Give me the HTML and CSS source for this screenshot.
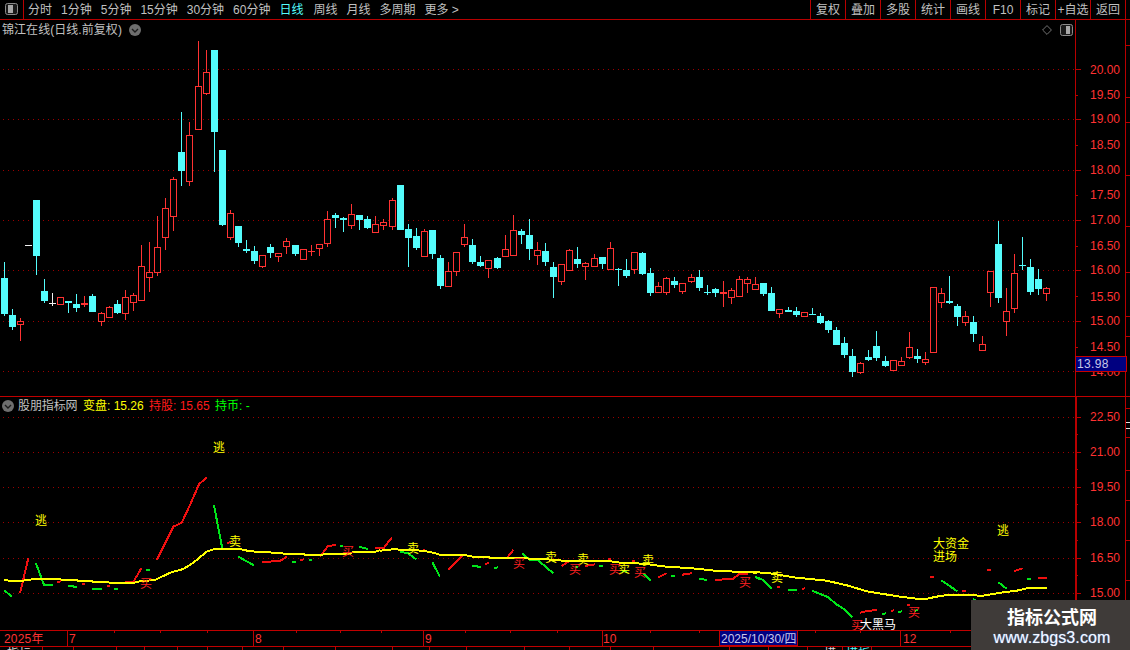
FILE: index.html
```html
<!DOCTYPE html>
<html lang="zh-CN">
<head>
<meta charset="utf-8">
<title>锦江在线 日线</title>
<link rel="stylesheet" href="styles.css">
</head>
<body>
<div class="app">
  <header class="toolbar">
    <div class="toggle">
      <svg class="ico" viewBox="0 0 13 12"><rect x="0.5" y="0.5" width="12" height="11" rx="2" class="ico-frame"/><rect x="3" y="2" width="5" height="8" class="ico-fill"/></svg>
    </div>
    <nav class="periods">
      <span>分时</span><span>1分钟</span><span>5分钟</span><span>15分钟</span><span>30分钟</span><span>60分钟</span>
      <span class="on">日线</span><span class="wk">周线</span><span>月线</span><span>多周期</span><span>更多 &gt;</span>
    </nav>
    <div class="tools">
      <span>复权</span><span>叠加</span><span>多股</span><span>统计</span><span>画线</span><span>F10</span><span>标记</span><span>+自选</span><span>返回</span>
    </div>
    <div class="strip"></div>
  </header>

  <section class="panel panel-main">
    <svg class="chart" id="main" viewBox="0 20 1130 376" width="1130" height="376">
      <g id="main-draw"></g>
      <g class="axis-text">
        <text x="1120" y="70">20.00</text><text x="1120" y="95">19.50</text><text x="1120" y="119">19.00</text>
        <text x="1120" y="145">18.50</text><text x="1120" y="170">18.00</text><text x="1120" y="195">17.50</text>
        <text x="1120" y="220">17.00</text><text x="1120" y="246">16.50</text><text x="1120" y="270">16.00</text>
        <text x="1120" y="297">15.50</text><text x="1120" y="321">15.00</text><text x="1120" y="347">14.50</text>
        <text x="1120" y="372">14.00</text>
      </g>
    </svg>
    <div class="title">
      <span>锦江在线(日线.前复权)</span>
      <svg class="circle" viewBox="0 0 12 12"><circle cx="6" cy="6" r="6" class="c-bg"/><path d="M3 5l3 3 3-3" class="c-ch"/></svg>
    </div>
    <div class="corner">
      <svg class="diamond" viewBox="0 0 12 12"><path d="M6 .7L11.3 6 6 11.3.7 6z"/></svg>
      <svg class="ico" viewBox="0 0 13 12"><rect x="0.5" y="0.5" width="12" height="11" rx="2" class="ico-frame"/><rect x="6" y="2" width="4" height="8" class="ico-fill"/></svg>
    </div>
    <div class="price">13.98</div>
  </section>

  <section class="panel panel-ind">
    <svg class="chart" id="ind" viewBox="0 397 1130 233" width="1130" height="233">
      <g id="ind-draw"></g>
      <g class="axis-text">
        <text x="1120" y="417">22.50</text><text x="1120" y="452">21.00</text><text x="1120" y="487">19.50</text>
        <text x="1120" y="522">18.00</text><text x="1120" y="558">16.50</text><text x="1120" y="593">15.00</text>
      </g>
      <g class="sig">
        <text class="y" x="41" y="519">逃</text><text class="y" x="219" y="446">逃</text><text class="y" x="1003" y="529">逃</text>
        <text class="y" x="235" y="540">卖</text><text class="y" x="413" y="547">卖</text><text class="y" x="551" y="556">卖</text>
        <text class="y" x="583" y="558">卖</text><text class="y" x="648" y="559">卖</text><text class="y" x="624" y="567">卖</text>
        <text class="y" x="777" y="576">卖</text>
        <text class="r" x="146" y="582">买</text><text class="r" x="348" y="550">买</text><text class="r" x="519" y="562">买</text>
        <text class="r" x="575" y="568">买</text><text class="r" x="615" y="568">买</text><text class="r" x="640" y="571">买</text>
        <text class="r" x="745" y="581">买</text><text class="r" x="914" y="611">买</text><text class="r" x="857" y="624">买</text>
        <text class="w" x="878" y="623">大黑马</text>
        <text class="y" x="951" y="542">大资金</text><text class="y" x="945" y="555">进场</text>
      </g>
    </svg>
    <div class="legend">
      <svg class="circle" viewBox="0 0 12 12"><circle cx="6" cy="6" r="6" class="c-bg"/><path d="M3 5l3 3 3-3" class="c-ch"/></svg>
      <span class="l-name">股朋指标网</span>
      <span class="l-y">变盘: 15.26</span>
      <span class="l-r">持股: 15.65</span>
      <span class="l-g">持币: -</span>
    </div>
  </section>

  <footer class="dates">
    <svg class="chart" id="dates" viewBox="0 630 1130 20" width="1130" height="20">
      <g id="dates-draw"></g>
      <rect class="date-box" x="719.5" y="630.5" width="78" height="15"/>
      <g class="date-text">
        <text x="4" y="643">2025年</text><text x="69" y="643">7</text><text x="255" y="643">8</text>
        <text x="425" y="643">9</text><text x="603" y="643">10</text><text x="903" y="643">12</text>
        <text class="cur" x="721" y="643">2025/10/30/四</text>
      </g>
      <text class="tab" x="7" y="658">指标</text>
      <text class="tab" x="824" y="658">模</text>
      <text class="tab cy" x="846" y="658">模板</text>
    </svg>
  </footer>
  <aside class="mark">
    <strong>指标公式网</strong>
    <span>www.zbgs3.com</span>
  </aside>
</div>
<script src="chart.js"></script>
</body>
</html>
```
FILE: styles.css
```css
* { box-sizing: border-box; }
html, body { margin: 0; padding: 0; background: #000; }
body { width: 1130px; height: 650px; overflow: hidden; font: 12px/1 "Liberation Sans", "Noto Sans CJK SC", sans-serif; color: #c0c0c0; }
.app { position: relative; width: 1130px; height: 650px; display: flex; flex-direction: column; overflow: hidden; }

.toolbar { flex: 0 0 20px; display: flex; align-items: stretch; border-bottom: 1px solid #b80000; }
.toggle { flex: 0 0 24px; border-right: 1px solid #b80000; display: flex; align-items: center; justify-content: center; padding-right: 1px; padding-bottom: 1px; }
.ico { width: 13px; height: 12px; display: block; }
.ico-frame { fill: #1a1a1a; stroke: #8a8a8a; stroke-width: 1; }
.ico-fill { fill: #a8a8a8; }
.periods { display: flex; align-items: center; gap: 9px; padding-left: 4px; white-space: nowrap; }
.periods .on { color: #54fcfc; }
.periods .wk { margin-left: 1px; }
.tools { margin-left: auto; display: flex; }
.tools span { width: 35px; border-left: 1px solid #b80000; display: flex; align-items: center; justify-content: center; white-space: nowrap; }
.strip { flex: 0 0 5px; border-left: 1px solid #b80000; }

.panel { position: relative; flex: none; }
.panel-main { height: 377px; border-bottom: 1px solid #c00000; }
.panel-ind { height: 233px; }
.chart { display: block; shape-rendering: crispEdges; }
.axis-text text { fill: #ff3232; font: 12px "Liberation Sans", sans-serif; text-anchor: end; dominant-baseline: central; letter-spacing: 0; }
.sig text { font: 12px "Noto Sans CJK SC", sans-serif; text-anchor: middle; dominant-baseline: central; }
.sig .y { fill: #ffff00; }
.sig .r { fill: #ff2020; }
.sig .w { fill: #fff; }

.title { position: absolute; left: 2px; top: 3px; display: flex; align-items: center; gap: 7px; height: 13px; white-space: nowrap; }
.title span { letter-spacing: .05px; }
.circle { width: 12px; height: 12px; flex: none; display: block; }
.c-bg { fill: #6e6e6e; }
.c-ch { fill: none; stroke: #1c1c1c; stroke-width: 1.4; }
.corner { position: absolute; left: 1042px; top: 4px; display: flex; align-items: center; gap: 8px; }
.diamond { width: 10px; height: 12px; display: block; }
.diamond path { fill: none; stroke: #8a8a8a; stroke-width: 1; }
.price { position: absolute; left: 1075px; top: 336px; width: 52px; height: 16px; background: #000080; border: 1px solid #c80000; color: #c8c8e8; padding-left: 1px; display: flex; align-items: center; font-size: 12px; letter-spacing: .35px; }

.legend { position: absolute; left: 2px; top: 2px; display: flex; align-items: center; height: 13px; white-space: nowrap; }
.l-name { margin-left: 4px; width: 65px; letter-spacing: -.1px; }
.l-y { color: #ffff00; width: 66px; }
.l-r { color: #ff1a1a; width: 66px; }
.l-g { color: #00ff00; }

.dates { flex: 1 1 auto; }
.date-box { fill: #000080; stroke: #c00000; stroke-width: 1; }
.date-text text { fill: #ff3232; font: 12px "Liberation Sans", "Noto Sans CJK SC", sans-serif; letter-spacing: .2px; }
.date-text .cur { fill: #c8c8e8; letter-spacing: 0; }
.tab { fill: #d8d8d8; font: 12px "Noto Sans CJK SC", sans-serif; }
.cy { fill: #54fcfc; }

.mark { position: absolute; left: 971px; top: 600px; width: 159px; height: 50px; background: #3f3b39; display: flex; flex-direction: column; align-items: center; gap: 3px; padding-top: 6px; padding-left: 3px; }
.mark strong { color: #fff; font: bold 18px/20px "Noto Sans CJK SC", sans-serif; }
.mark span { color: #f4f8ff; font: 16px/18px "Liberation Sans", sans-serif; letter-spacing: .1px; text-shadow: 0 0 1px #6fa8ff; }
```
FILE: chart.js
```js
var NS = "http://www.w3.org/2000/svg";
function el(parent, name, attrs) {
  var n = document.createElementNS(NS, name);
  for (var k in attrs) n.setAttribute(k, attrs[k]);
  parent.appendChild(n);
  return n;
}
function rect(p, x, y, w, h, fill) { return el(p, "rect", { x: x, y: y, width: w, height: h, fill: fill }); }
var RED = "#ff3232", CY = "#54fcfc", LINE = "#b80000", DOT = "#9c0000";

// type, wick top, body top, body bottom, wick bottom
var candles = [
"c262,278,314,316","c309,315,327,330","r318,321,324,341","d245,245,246,245","c200,200,256,275",
"c279,291,301,303","w293,303,304,306","r297,297,304,305","c301,301,303,313","c294,304,308,312",
"f296,303,305,307","c294,296,312,312","r312,313,321,326","r306,307,317,318","c300,304,313,314",
"r290,297,313,320","r293,295,302,311","r245,266,300,300","r242,272,277,292","r216,247,272,276",
"r198,208,237,250","r177,179,216,231","c112,152,171,186","r122,135,181,186","r41,86,129,129",
"r50,72,93,95","c50,50,132,172","c150,150,225,226","r210,213,237,240","c226,226,243,247",
"c240,249,251,253","c246,251,261,264","r255,255,266,268","c244,247,253,258","r253,253,256,262",
"r238,241,246,254","c245,245,254,256","r249,249,259,259","f245,251,252,256","r244,244,248,256",
"r211,219,243,247","c213,215,218,228","c217,218,220,232","r204,214,225,229","c215,215,220,230",
"c216,219,228,229","r216,224,232,232","r219,222,225,230","r198,200,226,230","c185,185,230,230",
"c224,229,238,267","c228,236,248,250","r229,231,256,256","c230,230,254,259","c255,258,286,289",
"r262,271,286,286","r252,252,271,276","r224,237,244,247","c239,245,262,264","c256,262,266,267",
"r260,260,268,278","c257,258,268,269","r235,249,256,256","r215,230,255,255","c229,231,235,244",
"c219,235,249,260","r242,250,255,265","c243,251,262,266","c262,267,277,298","r264,264,281,285",
"r249,250,270,270","c247,259,264,268","r262,263,266,280","r254,258,266,266","c257,257,264,269",
"r242,248,269,269","c268,269,270,286","c259,270,276,278","r252,252,269,274","c252,253,274,275",
"c268,273,293,296","r282,286,292,292","r277,278,292,295","c277,281,285,288","r283,283,291,294",
"r274,277,281,283","c270,277,288,291","c285,292,293,295","c288,289,293,297","f281,292,294,307",
"r288,290,297,304","r276,279,296,296","r277,279,283,293","r277,284,289,289","c283,283,294,296",
"c287,293,311,311","r309,309,313,318","c307,310,312,312","c307,311,315,317","r312,312,316,316",
"c308,314,315,315","c313,316,323,324","c320,321,330,333","c327,330,345,345","c337,343,355,358",
"c349,356,372,377","r362,363,372,374","c350,357,360,361","c331,346,358,361","c356,361,366,367",
"r360,360,370,370","r357,361,365,365","r332,347,357,359","c349,356,359,363","r352,359,362,365",
"r287,287,352,352","r288,293,302,308","c276,301,303,304","c304,306,317,326","r311,316,322,326",
"c316,322,334,342","r336,344,350,351","r271,271,292,307","c221,244,298,303","r288,311,321,336",
"r254,273,308,313","c237,265,266,270","c259,267,292,295","c269,279,289,295","r287,288,293,301"
];
var jumps = [12, 24, 36, 48, 61, 73, 85, 97, 109, 121];
function cx(i) {
  var j = 0;
  jumps.forEach(function (n) { if (i >= n) j++; });
  return 4 + 8 * i + j;
}

function grid(g, ys) {
  ys.forEach(function (y) {
    el(g, "line", { x1: 3, x2: 1075, y1: y + .5, y2: y + .5, stroke: DOT, "stroke-dasharray": "1 4" });
  });
}
function axis(g, x, y1, y2, w, majors, minors) {
  rect(g, x, y1, w, y2 - y1, LINE);
  majors.forEach(function (y) { rect(g, x, y, 6, 1, LINE); });
  minors.forEach(function (y) { rect(g, x, y, 3, 1, LINE); });
}
function rightStrip(g, y1, y2, ticks) {
  rect(g, 1125, y1, 1, y2 - y1, LINE);
  ticks.forEach(function (y) { rect(g, 1126, y, 4, 1, LINE); });
}

// main panel
var m = document.getElementById("main-draw");
grid(m, [69, 119, 170, 220, 270, 321, 371]);
axis(m, 1075, 20, 396, 1, [69, 119, 170, 220, 270, 321, 371], [95, 145, 195, 246, 296, 347]);
rightStrip(m, 20, 396, [45, 97, 122, 175, 226, 272, 316, 336]);
candles.forEach(function (s, i) {
  var t = s[0], v = s.slice(1).split(",").map(Number), x = cx(i);
  var col = t === "c" ? CY : (t === "d" || t === "w") ? "#f0f0f0" : RED;
  if (t === "d") { rect(m, x - 3, v[0], 7, 1, col); return; }
  rect(m, x, v[0], 1, v[3] - v[0], col);
  if (t === "c" || t === "f") { rect(m, x - 3, v[1], 7, Math.max(v[2] - v[1], 1), col); return; }
  if (t === "w") { rect(m, x - 3, v[1], 7, 1, col); return; }
  el(m, "rect", { x: x - 2.5, y: v[1] + .5, width: 6, height: v[2] - v[1], fill: "#000", stroke: col });
});

// indicator panel
var n = document.getElementById("ind-draw");
var YEL = "#ffff00", R2 = "#f01010", G2 = "#00e61a";
grid(n, [417, 452, 487, 522, 558, 593]);
axis(n, 1075, 397, 630, 2, [417, 452, 487, 522, 558, 593], [434, 469, 504, 540, 575, 611]);
rightStrip(n, 397, 630, [408, 437, 470, 500, 540, 580, 610]);
rect(n, 1126, 422, 4, 1, "#e0e0e0");
rect(n, 1126, 428, 4, 1, "#e0e0e0");

function poly(col, w, ox, oy, sets) {
  sets.forEach(function (a) {
    var pts = [];
    for (var i = 0; i < a.length; i += 2) pts.push((ox + a[i] / 3).toFixed(1) + "," + (oy + a[i + 1] / 3).toFixed(1));
    el(n, "polyline", { points: pts.join(" "), fill: "none", stroke: col, "stroke-width": w });
  });
}
// three reference frames of the source crops: (0,390) (380,520) (750,400)
poly(R2, 2, 0, 390, [[60,610,85,505],[376,576,400,576,425,533],[470,510,495,460,520,410,545,398,570,345,597,283,620,262],[172,576,182,574],[245,582,255,581],[320,589,330,587],[682,458,692,457],[787,516,840,513,860,500],[900,510,912,508],[960,500,985,467,1007,466],[1125,474,1140,473]]);
poly(G2, 2, 0, 390, [[12,601,37,620],[108,520,132,585,158,585],[205,587,230,591],[277,597,305,597],[343,597,353,596],[438,541,450,540],[642,346,667,476],[715,500,762,526],[877,516,887,515],[926,510,935,509],[1020,468,1030,467],[1078,470,1103,477]]);
poly(R2, 2, 380, 520, [[0,85,12,83,36,52],[125,92,135,91],[205,150,250,103],[316,131,326,130],[378,117,400,90],[545,138,570,122],[616,138,645,133],[684,117,692,116],[755,123,765,122],[835,172,860,160],[907,164,935,160],[1005,180,1060,176,1078,162,1105,161]]);
poly(G2, 2, 380, 520, [[60,95,85,100,108,118],[157,127,180,170],[277,137,302,141],[343,144,353,142],[425,100,450,119,473,120,520,160],[585,142,595,140],[658,138,668,137],[725,152,740,155],[790,160,812,182],[873,168,885,167],[958,176,982,180],[1125,170,1140,178]]);
poly(R2, 2, 750, 400, [[80,561,90,560],[155,567,165,565],[330,638,355,632,380,631],[422,633,432,631],[470,614,480,615],[540,531,552,530],[636,574,648,572],[712,511,722,509],[793,513,818,505],[865,534,890,534]]);
poly(G2, 2, 750, 400, [[15,530,40,540,65,566],[115,570,140,570],[187,572,235,592,258,612,283,628,308,652],[397,642,408,640],[445,636,455,634],[495,632,503,630],[574,541,622,574],[668,598,678,600],[745,547,770,566],[832,537,842,536]]);
poly(YEL, 2, 0, 390, [[12,570,36,573,60,573,84,570,108,566,180,566,185,570,230,570,235,573,276,573,280,576,325,576,330,579,400,579,420,574,465,570,490,558,510,548,550,537,580,518,620,485,645,476,715,476,735,481,765,485,810,485,815,489,860,491,910,491,915,495,960,495,985,491,1050,491,1060,485,1125,485,1140,481]]);
poly(YEL, 2, 380, 520, [[0,92,40,88,130,92,160,98,180,104,250,104,280,110,320,110,330,113,420,113,450,116,520,119,550,122,680,122,720,128,790,131,860,140,910,143,950,146,1005,152,1130,158]]);
poly(YEL, 2, 750, 400, [[0,515,60,520,130,532,230,542,290,556,350,574,400,582,450,590,500,596,530,596,570,588,600,584,700,587,760,577,800,572,830,565,890,563]]);

// date bar
var d = document.getElementById("dates-draw");
rect(d, 0, 630, 1130, 1, "#c00000");
rect(d, 0, 646, 1130, 1, "#c00000");
[67, 253, 423, 602, 900].forEach(function (x) { rect(d, x, 630, 1, 16, "#c00000"); });
[114, 160, 207, 296, 340, 381, 465, 510, 557, 650, 699, 769, 815, 860, 950, 994].forEach(function (x) { rect(d, x, 631, 1, 2, "#c00000"); });
[42, 73, 116, 144, 177, 207, 242, 283, 335, 392, 429, 466, 524, 569, 610, 653, 729, 768, 807, 842, 871].forEach(function (x) { rect(d, x, 647, 1, 3, "#c00000"); });
```
